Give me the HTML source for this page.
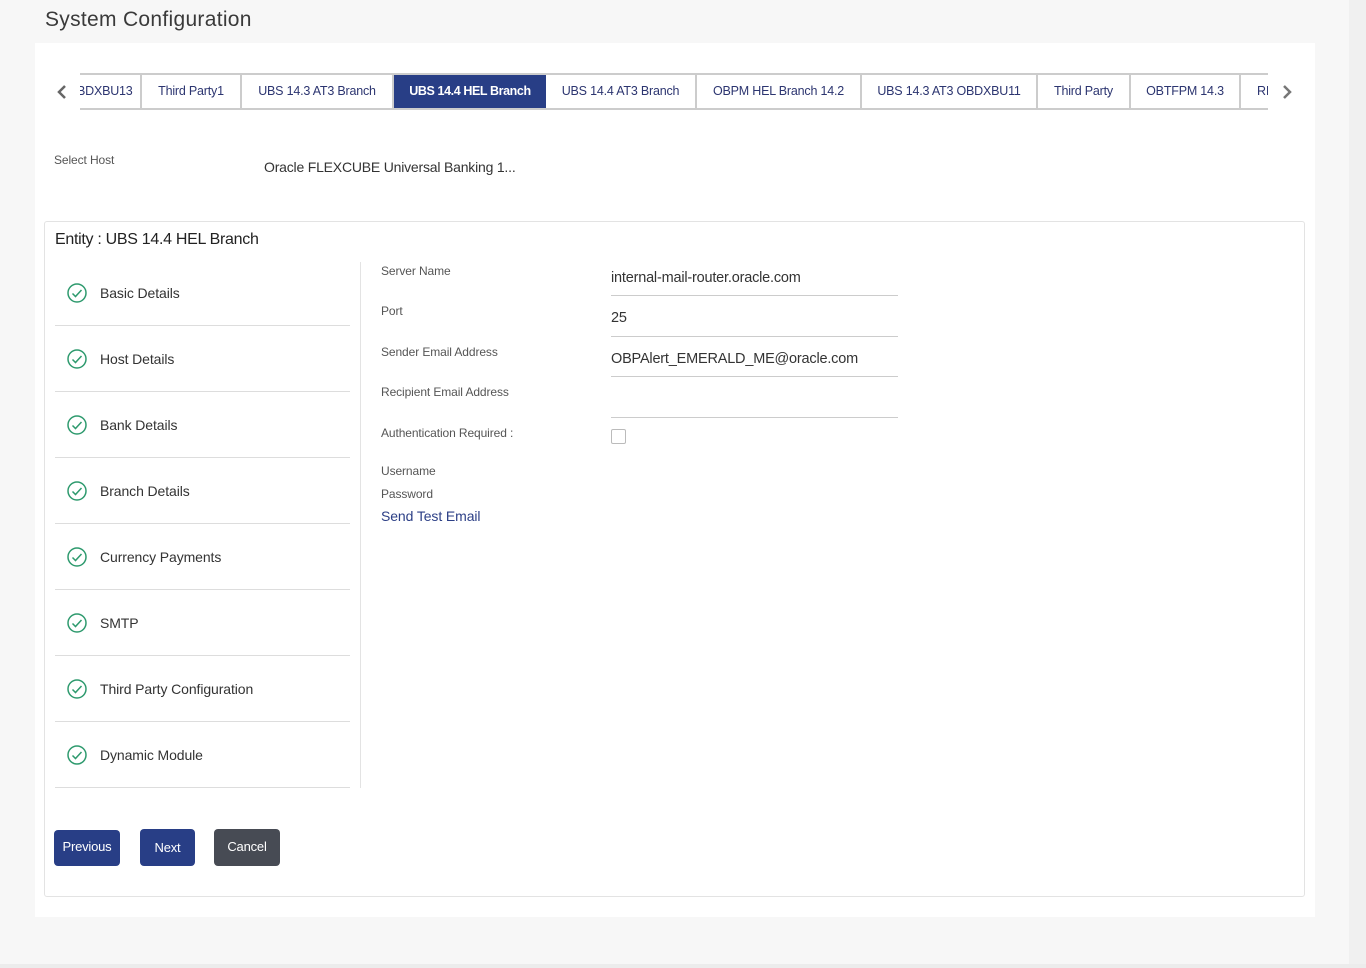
<!DOCTYPE html>
<html><head><style>
*{box-sizing:border-box;margin:0;padding:0}
body{width:1366px;height:968px;background:#f7f7f7;font-family:"Liberation Sans",sans-serif;position:relative;overflow:hidden;color:#333}
.abs{position:absolute}
.strip{left:1349px;top:0;width:17px;height:968px;background:#f0f0f0}
.bot{left:0;top:964px;width:1366px;height:4px;background:#ececec}
h1{position:absolute;left:45px;top:8px;font-weight:normal;font-size:21px;color:#3a3a3a;letter-spacing:.3px}
.card{left:35px;top:43px;width:1280px;height:874px;background:#fff}
.tabs{left:80px;top:73px;width:1188px;height:37px;overflow:hidden;border-top:2px solid #ccc;border-bottom:2px solid #ccc;white-space:nowrap}
.tab{position:absolute;top:-2px;height:37px;line-height:37px;font-size:12.5px;color:#2c3570;text-align:center;border-right:2px solid #ccc;letter-spacing:-.2px}
.tab.act{background:#283e86;color:#fff;border:none;border-radius:2px}
.lbl{font-size:12px;color:#555;letter-spacing:-.1px}
.val{font-size:14.5px;color:#333;letter-spacing:-.2px}
.ent{left:44px;top:221px;width:1261px;height:676px;border:1px solid #e3e3e3;border-radius:3px}
.nav{left:55px;width:295px;height:66px;border-bottom:1px solid #ddd}
.nav svg{position:absolute;left:12px;top:23px}
.nav span{position:absolute;left:45px;top:25px;font-size:14px;color:#333;letter-spacing:-.1px}
.line{left:611px;width:287px;height:1px;background:#ccc}
.btn{top:830px;height:36px;border-radius:4px;color:#fff;font-size:13px;text-align:center;line-height:34px;letter-spacing:-.2px}
</style></head><body>
<div class="abs strip"></div><div class="abs bot"></div>
<h1>System Configuration</h1>
<div class="abs card"></div>
<svg class="abs" style="left:55px;top:84px" width="14" height="16"><path d="M10 2L4 8l6 6" fill="none" stroke="#666" stroke-width="2.5"/></svg>
<svg class="abs" style="left:1280px;top:84px" width="14" height="16"><path d="M4 2l6 6-6 6" fill="none" stroke="#777" stroke-width="2.5"/></svg>
<div class="abs tabs">
<div class="tab" style="left:-20px;width:82px">OBDXBU13</div>
<div class="tab" style="left:62px;width:100px">Third Party1</div>
<div class="tab" style="left:162px;width:152px">UBS 14.3 AT3 Branch</div>
<div class="tab act" style="left:314px;width:152px;font-weight:bold;letter-spacing:-.4px">UBS 14.4 HEL Branch</div>
<div class="tab" style="left:466px;width:151px">UBS 14.4 AT3 Branch</div>
<div class="tab" style="left:617px;width:165px">OBPM HEL Branch 14.2</div>
<div class="tab" style="left:782px;width:176px">UBS 14.3 AT3 OBDXBU11</div>
<div class="tab" style="left:958px;width:93px">Third Party</div>
<div class="tab" style="left:1051px;width:110px">OBTFPM 14.3</div>
<div class="tab" style="left:1161px;width:80px;text-align:left;padding-left:16px;border:none">RI</div>
</div>
<div class="abs lbl" style="left:54px;top:153px">Select Host</div>
<div class="abs val" style="left:264px;top:159px;font-size:14px">Oracle FLEXCUBE Universal Banking 1...</div>
<div class="abs ent"></div>
<div class="abs" style="left:55px;top:231px;font-size:16px;color:#222;letter-spacing:-.3px">Entity : UBS 14.4 HEL Branch</div>
<div class="abs" style="left:360px;top:262px;width:1px;height:526px;background:#e3e3e3"></div>
<div class="abs nav" style="top:260px"><svg width="20" height="20"><circle cx="10" cy="10" r="9" fill="none" stroke="#2e9a6e" stroke-width="1.5"/><path d="M5.5 10.5l3 3 6-6.5" fill="none" stroke="#2e9a6e" stroke-width="1.5"/></svg><span>Basic Details</span></div>
<div class="abs nav" style="top:326px"><svg width="20" height="20"><circle cx="10" cy="10" r="9" fill="none" stroke="#2e9a6e" stroke-width="1.5"/><path d="M5.5 10.5l3 3 6-6.5" fill="none" stroke="#2e9a6e" stroke-width="1.5"/></svg><span>Host Details</span></div>
<div class="abs nav" style="top:392px"><svg width="20" height="20"><circle cx="10" cy="10" r="9" fill="none" stroke="#2e9a6e" stroke-width="1.5"/><path d="M5.5 10.5l3 3 6-6.5" fill="none" stroke="#2e9a6e" stroke-width="1.5"/></svg><span>Bank Details</span></div>
<div class="abs nav" style="top:458px"><svg width="20" height="20"><circle cx="10" cy="10" r="9" fill="none" stroke="#2e9a6e" stroke-width="1.5"/><path d="M5.5 10.5l3 3 6-6.5" fill="none" stroke="#2e9a6e" stroke-width="1.5"/></svg><span>Branch Details</span></div>
<div class="abs nav" style="top:524px"><svg width="20" height="20"><circle cx="10" cy="10" r="9" fill="none" stroke="#2e9a6e" stroke-width="1.5"/><path d="M5.5 10.5l3 3 6-6.5" fill="none" stroke="#2e9a6e" stroke-width="1.5"/></svg><span>Currency Payments</span></div>
<div class="abs nav" style="top:590px"><svg width="20" height="20"><circle cx="10" cy="10" r="9" fill="none" stroke="#2e9a6e" stroke-width="1.5"/><path d="M5.5 10.5l3 3 6-6.5" fill="none" stroke="#2e9a6e" stroke-width="1.5"/></svg><span>SMTP</span></div>
<div class="abs nav" style="top:656px"><svg width="20" height="20"><circle cx="10" cy="10" r="9" fill="none" stroke="#2e9a6e" stroke-width="1.5"/><path d="M5.5 10.5l3 3 6-6.5" fill="none" stroke="#2e9a6e" stroke-width="1.5"/></svg><span>Third Party Configuration</span></div>
<div class="abs nav" style="top:722px"><svg width="20" height="20"><circle cx="10" cy="10" r="9" fill="none" stroke="#2e9a6e" stroke-width="1.5"/><path d="M5.5 10.5l3 3 6-6.5" fill="none" stroke="#2e9a6e" stroke-width="1.5"/></svg><span>Dynamic Module</span></div>
<div class="abs lbl" style="left:381px;top:264px">Server Name</div>
<div class="abs val" style="left:611px;top:270px">internal-mail-router.oracle.com</div>
<div class="abs line" style="top:295px"></div>
<div class="abs lbl" style="left:381px;top:304px">Port</div>
<div class="abs val" style="left:611px;top:310px">25</div>
<div class="abs line" style="top:336px"></div>
<div class="abs lbl" style="left:381px;top:345px">Sender Email Address</div>
<div class="abs val" style="left:611px;top:351px">OBPAlert_EMERALD_ME@oracle.com</div>
<div class="abs line" style="top:376px"></div>
<div class="abs lbl" style="left:381px;top:385px">Recipient Email Address</div>
<div class="abs line" style="top:417px"></div>
<div class="abs lbl" style="left:381px;top:426px">Authentication Required :</div>
<div class="abs" style="left:611px;top:429px;width:15px;height:15px;border:1px solid #bbb;border-radius:2px"></div>
<div class="abs lbl" style="left:381px;top:464px">Username</div>
<div class="abs lbl" style="left:381px;top:487px">Password</div>
<div class="abs" style="left:381px;top:508px;font-size:14px;color:#2c3f86;letter-spacing:-.1px">Send Test Email</div>
<div class="abs btn" style="left:54px;width:66px;background:#283e86">Previous</div>
<div class="abs btn" style="left:140px;top:829px;width:55px;height:37px;background:#283e86;line-height:37px">Next</div>
<div class="abs btn" style="left:214px;top:829px;width:66px;height:37px;background:#474b54;line-height:35px">Cancel</div>
</body></html>
